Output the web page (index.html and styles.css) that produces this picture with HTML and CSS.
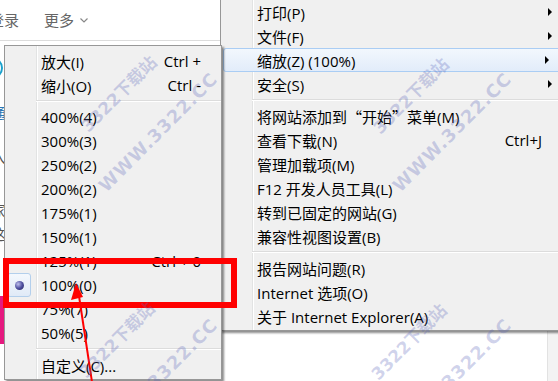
FILE: index.html
```html
<!DOCTYPE html>
<html lang="zh-CN">
<head>
<meta charset="utf-8">
<title>IE 缩放菜单</title>
<link rel="stylesheet" href="styles.css">
</head>
<body>
<div class="screen">
  <div class="page">
    <div class="main">
      <header class="topbar">
        <span class="tb-item">登录</span>
        <span class="tb-item">更多<svg class="chev" width="8" height="5" viewBox="0 0 8 5"><polyline points="0.5,0.5 4,4 7.5,0.5" fill="none" stroke="#888" stroke-width="1.2"/></svg></span>
      </header>
      <div class="side">
        <span class="ring"></span>
        <span class="s-text blue">通</span>
        <span class="s-text">入</span>
        <span class="s-text gap">家</span>
        <span class="s-text">这</span>
        <span class="pink"></span>
      </div>
    </div>
    <div class="scrollbar"></div>
  </div>

  <div class="menu menu-main">
    <div class="item has-sub">打印(P)</div>
    <div class="item has-sub">文件(F)</div>
    <div class="item has-sub hot">缩放(Z) (100%)</div>
    <div class="item has-sub">安全(S)</div>
    <div class="sep"></div>
    <div class="item">将网站添加到<span class="cjk">“开始”</span>菜单(M)</div>
    <div class="item">查看下载(N)<span class="key">Ctrl+J</span></div>
    <div class="item">管理加载项(M)</div>
    <div class="item">F12 开发人员工具(L)</div>
    <div class="item">转到已固定的网站(G)</div>
    <div class="item">兼容性视图设置(B)</div>
    <div class="sep"></div>
    <div class="item">报告网站问题(R)</div>
    <div class="item">Internet 选项(O)</div>
    <div class="item">关于 Internet Explorer(A)</div>
  </div>

  <div class="menu menu-sub">
    <div class="item">放大(I)<span class="key">Ctrl +</span></div>
    <div class="item">缩小(O)<span class="key">Ctrl -</span></div>
    <div class="sep"></div>
    <div class="item">400%(4)</div>
    <div class="item">300%(3)</div>
    <div class="item">250%(2)</div>
    <div class="item">200%(2)</div>
    <div class="item">175%(1)</div>
    <div class="item">150%(1)</div>
    <div class="item">125%(1)<span class="key">Ctrl + 0</span></div>
    <div class="item checked"><span class="check"><span class="dot"></span></span>100%(0)</div>
    <div class="item">75%(7)</div>
    <div class="item">50%(5)</div>
    <div class="sep"></div>
    <div class="item">自定义(C)...</div>
  </div>

  <div class="redbox"></div>
  <svg class="arrow" width="558" height="381" viewBox="0 0 558 381">
    <line x1="92" y1="382" x2="79" y2="296" stroke="#f00" stroke-width="2"/>
    <polygon points="76,283 71,300 83,297" fill="#f00"/>
  </svg>

  <span class="wm" style="left:118px;top:93px">3322下载站</span>
  <span class="wm wide" style="left:158px;top:132px">WWW.3322.CC</span>
  <span class="wm" style="left:410px;top:95px">3322下载站</span>
  <span class="wm wide" style="left:452px;top:132px">WWW.3322.CC</span>
  <span class="wm" style="left:116px;top:339px">3322下载站</span>
  <span class="wm wide" style="left:158px;top:378px">WWW.3322.CC</span>
  <span class="wm" style="left:408px;top:341px">3322下载站</span>
  <span class="wm wide" style="left:452px;top:378px">WWW.3322.CC</span>
</div>
</body>
</html>
```
FILE: styles.css
```css
* { box-sizing: border-box; }
html, body { margin: 0; padding: 0; }
body {
  width: 558px;
  height: 381px;
  overflow: hidden;
  background: #fff;
  font-family: "Open Sans", "Noto Sans CJK SC", sans-serif;
  font-size: 15px;
}
.screen {
  position: relative;
  width: 558px;
  height: 381px;
  overflow: hidden;
}

/* page behind the menus */
.page { display: flex; height: 100%; }
.main { flex: 1; background: #fff; overflow: hidden; }
.scrollbar { width: 11px; background: #f3f3f3; border-left: 1px solid #e2e2e2; }

.topbar {
  height: 41px;
  margin-left: -11px;
  padding-bottom: 2px;
  border-bottom: 1px solid #dcdcdc;
  display: flex;
  align-items: center;
  gap: 25px;
  color: #666;
  font-family: "Noto Sans CJK SC", sans-serif;
}
.tb-item { display: flex; align-items: center; gap: 6px; }
.chev { margin-top: 3px; }

.side {
  display: flex;
  flex-direction: column;
  align-items: flex-start;
  margin-left: -9px;
  padding-top: 16px;
  font-family: "Noto Sans CJK SC", sans-serif;
  color: #555;
}
.ring {
  width: 22px;
  height: 22px;
  border: 2px solid #1aa1cc;
  border-radius: 50%;
  margin-left: -10px;
}
.s-text { line-height: 24px; margin-top: 20px; }
.s-text.blue { color: #2b78b5; margin-top: 22px; }
.s-text.gap { margin-top: 29px; }
.s-text + .s-text.gap + .s-text { margin-top: 0; }
.pink { width: 14px; height: 48px; background: #e5197f; margin-top: 50px; }

/* menus */
.menu {
  position: absolute;
  background-color: #f0f0f0;
  background-image: linear-gradient(to right, transparent 31px, #e2e3e3 31px, #e2e3e3 32px, #fff 32px, #fff 33px, transparent 33px);
  border: 1px solid #979797;
  box-shadow: 2px 2px 2px rgba(0, 0, 0, 0.45);
  padding: 3px 0 2px;
  color: #000;
}
.menu-main { left: 220px; top: -4px; width: 350px; }
.menu-sub { left: 4px; top: 45px; width: 218px; }

.item {
  height: 24px;
  display: flex;
  align-items: center;
  padding-left: 36px;
  white-space: nowrap;
}
.cjk { font-family: "Noto Sans CJK SC", sans-serif; }
.menu-main .item { padding-right: 27px; }
.menu-sub .item { padding-right: 20px; }
.key { margin-left: auto; }

.has-sub::after {
  content: "";
  margin-left: auto;
  margin-right: -10px;
  width: 0;
  height: 0;
  border-left: 4px solid #000;
  border-top: 4px solid transparent;
  border-bottom: 4px solid transparent;
}

.item.hot {
  margin: 0 2px;
  padding-left: 33px;
  padding-right: 24px;
  border: 1px solid #aacdf4;
  border-radius: 3px;
  background: linear-gradient(#f2f7fd, #e2ecfa);
}
.item.hot::after { margin-right: -7px; }

.sep {
  height: 8px;
  margin-left: 31px;
  background: linear-gradient(to bottom, transparent 3px, #dcdcdc 3px, #dcdcdc 4px, #fff 4px, #fff 5px, transparent 5px);
}

.item.checked { padding-left: 2px; }
.check {
  width: 24px;
  height: 24px;
  margin-right: 10px;
  border: 1px solid #b3cfec;
  border-radius: 3px;
  background: linear-gradient(#f4f8fd, #e0eaf7);
  display: flex;
  align-items: center;
  justify-content: center;
}
.dot {
  width: 9px;
  height: 9px;
  border-radius: 50%;
  background: radial-gradient(circle at 35% 35%, #c0c0ee, #5050a0 50%, #20205a);
}

/* annotations */
.redbox {
  position: absolute;
  left: 3px;
  top: 258px;
  width: 234px;
  height: 50px;
  border: 6px solid #f00;
}
.arrow { position: absolute; left: 0; top: 0; pointer-events: none; }

/* watermark */
.wm {
  position: absolute;
  transform: translate(-50%, -50%) rotate(-45deg);
  font-family: "DejaVu Sans", "Noto Sans CJK SC", sans-serif;
  font-weight: bold;
  font-size: 17px;
  color: rgba(90, 100, 185, 0.28);
  white-space: nowrap;
  pointer-events: none;
}
.wm.wide { font-size: 18px; letter-spacing: 1px; }
```
